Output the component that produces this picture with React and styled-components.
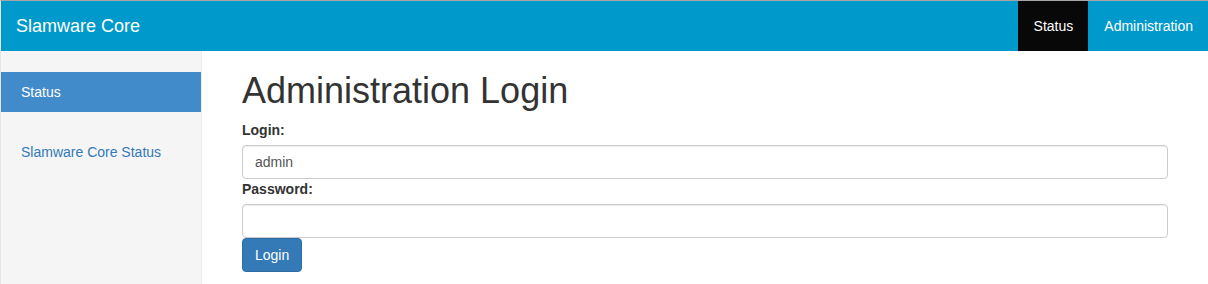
import React from 'react';
import styled, { createGlobalStyle } from 'styled-components';

const GlobalStyle = createGlobalStyle`
  html, body {
    margin: 0;
    padding: 0;
    background: #fff;
  }
  body {
    font-family: "Liberation Sans", Arial, sans-serif;
    font-size: 14px;
    line-height: 20px;
    color: #333;
    border-top: 1px solid #a6a6a6;
    border-left: 1px solid #e6e6e6;
    height: 283px;
    overflow: hidden;
  }
`;

const Navbar = styled.div`
  display: flex;
  align-items: stretch;
  justify-content: space-between;
  height: 50px;
  background: #0099cc;
`;

const Brand = styled.a`
  padding: 15px;
  font-size: 18px;
  line-height: 20px;
  color: #fff;
  text-decoration: none;
`;

const NavList = styled.div`
  display: flex;
`;

const NavItem = styled.a`
  padding: 15px 15px 15px 16px;
  line-height: 20px;
  color: #fff;
  text-decoration: none;
  background: ${(p) => (p.$active ? '#080808' : 'transparent')};
`;

const Body = styled.div`
  display: flex;
  height: 233px;
`;

const Sidebar = styled.div`
  width: 200px;
  flex: none;
  background: #f5f5f5;
  border-right: 1px solid #eee;
  padding-top: 21px;
  display: flex;
  flex-direction: column;
  gap: 20px;
`;

const SideItem = styled.a`
  padding: 10px 20px;
  line-height: 20px;
  color: ${(p) => (p.$active ? '#fff' : '#337ab7')};
  background: ${(p) => (p.$active ? '#428bca' : 'transparent')};
  text-decoration: none;
`;

const Main = styled.div`
  flex: 1;
  padding: 0 40px;
`;

const Title = styled.h1`
  margin: 20px 0 9px;
  font-size: 36px;
  font-weight: 500;
  line-height: 1.1;
  color: #333;
`;

const Label = styled.label`
  display: block;
  margin-bottom: 5px;
  font-weight: bold;
`;

const Input = styled.input`
  display: block;
  box-sizing: border-box;
  width: 100%;
  height: 34px;
  padding: 6px 12px;
  font-family: inherit;
  font-size: 14px;
  color: #555;
  border: 1px solid #ccc;
  border-radius: 4px;
  box-shadow: inset 0 1px 1px rgba(0, 0, 0, 0.075);
  outline: none;
`;

const Button = styled.button`
  display: block;
  height: 34px;
  padding: 6px 12px;
  font-family: inherit;
  font-size: 14px;
  line-height: 20px;
  color: #fff;
  background: #337ab7;
  border: 1px solid #2e6da4;
  border-radius: 4px;
`;

export default function App() {
  return (
    <>
      <GlobalStyle />
      <Navbar>
        <Brand>Slamware Core</Brand>
        <NavList>
          <NavItem $active>Status</NavItem>
          <NavItem>Administration</NavItem>
        </NavList>
      </Navbar>
      <Body>
        <Sidebar>
          <SideItem $active>Status</SideItem>
          <SideItem>Slamware Core Status</SideItem>
        </Sidebar>
        <Main>
          <Title>Administration Login</Title>
          <form onSubmit={(e) => e.preventDefault()}>
            <Label>Login:</Label>
            <Input type="text" defaultValue="admin" />
            <Label>Password:</Label>
            <Input type="password" />
            <Button type="submit">Login</Button>
          </form>
        </Main>
      </Body>
    </>
  );
}
